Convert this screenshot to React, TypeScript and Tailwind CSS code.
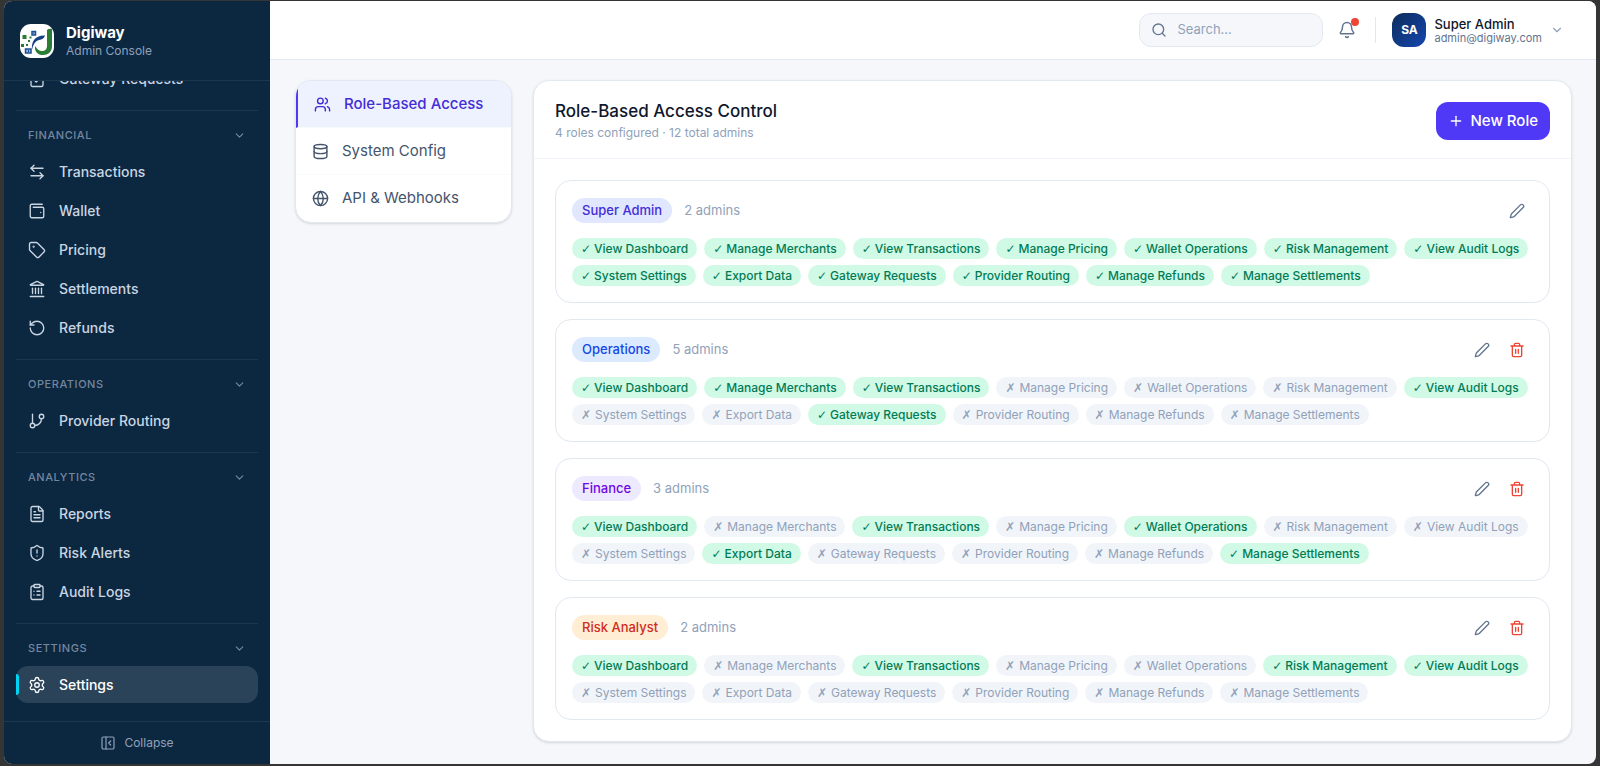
import { useState } from 'react';
import {
  ArrowLeftRight, Bell, ChevronDown, ClipboardCheck, ClipboardList, Database, FileText, GitBranch, Globe,
  Landmark, PanelLeftClose, Plus, RotateCcw, Search, Settings, ShieldAlert, Tag, Users, WalletMinimal,
} from 'lucide-react';

const navSections = [
  {
    title: 'Financial',
    items: [
      { label: 'Transactions', icon: ArrowLeftRight },
      { label: 'Wallet', icon: WalletMinimal },
      { label: 'Pricing', icon: Tag },
      { label: 'Settlements', icon: Landmark },
      { label: 'Refunds', icon: RotateCcw },
    ],
  },
  { title: 'Operations', items: [{ label: 'Provider Routing', icon: GitBranch }] },
  {
    title: 'Analytics',
    items: [
      { label: 'Reports', icon: FileText },
      { label: 'Risk Alerts', icon: ShieldAlert },
      { label: 'Audit Logs', icon: ClipboardList },
    ],
  },
  { title: 'Settings', items: [{ label: 'Settings', icon: Settings }] },
];

const tabs = [
  { label: 'Role-Based Access', icon: Users },
  { label: 'System Config', icon: Database },
  { label: 'API & Webhooks', icon: Globe },
];

const permissions = [
  'View Dashboard', 'Manage Merchants', 'View Transactions', 'Manage Pricing', 'Wallet Operations',
  'Risk Management', 'View Audit Logs', 'System Settings', 'Export Data', 'Gateway Requests',
  'Provider Routing', 'Manage Refunds', 'Manage Settlements',
];

const roles = [
  { name: 'Super Admin', admins: 2, badge: 'bg-indigo-100 text-indigo-700', granted: permissions, locked: true },
  {
    name: 'Operations', admins: 5, badge: 'bg-blue-100 text-blue-700', locked: false,
    granted: ['View Dashboard', 'Manage Merchants', 'View Transactions', 'View Audit Logs', 'Gateway Requests'],
  },
  {
    name: 'Finance', admins: 3, badge: 'bg-violet-100 text-violet-700', locked: false,
    granted: ['View Dashboard', 'View Transactions', 'Wallet Operations', 'Export Data', 'Manage Settlements'],
  },
  {
    name: 'Risk Analyst', admins: 2, badge: 'bg-orange-100 text-[#cf2e1e]', locked: false,
    granted: ['View Dashboard', 'View Transactions', 'Risk Management', 'View Audit Logs'],
  },
];

function Logo() {
  return (
    <svg viewBox="0 0 34 34" className="size-[34px] shrink-0" aria-hidden="true">
      <rect width="34" height="34" rx="11" fill="#fff" />
      <path d="M27 6q2-2 5-1v17c0 6-4 9-9 9-4 0-7-2-8-6v-3c2 3 4 5 7 5 3 0 5-2 5-5z" fill="#2b7d35" />
      <path d="M12 26c-1-8 3-15 13-14.500-1 3-3 4-6 4.500-4 1-6 5-7 10z" fill="#173f86" />
      <path d="M2.500 11h4v4h-4zM8 16h2v2H8zM1 20h3v3H1zM6 20h2v2H6zM9.500 12.500h2v2h-2z" fill="#2b7d35" />
      <path d="M12 7.500h3.500V11H12zM5.500 25H11v4H5.500z" fill="#9db7dd" stroke="#1d4f93" strokeWidth="1.500" />
      <path d="M13 8.500h1v1h-1zM8 26h1v2H8z" fill="#1d4f93" />
    </svg>
  );
}

function PencilIcon() {
  return (
    <svg viewBox="0 0 24 24" className="size-4" fill="none" stroke="currentColor" strokeWidth="2" strokeLinecap="round" strokeLinejoin="round">
      <path d="M21.174 6.812a1 1 0 0 0-3.986-3.987L3.842 16.174a2 2 0 0 0-.5.830l-1.321 4.352a.5.5 0 0 0 .623.622l4.353-1.320a2 2 0 0 0 .830-.497z" />
    </svg>
  );
}

function TrashIcon() {
  return (
    <svg viewBox="0 0 24 24" className="size-4" fill="none" stroke="currentColor" strokeWidth="2" strokeLinecap="round" strokeLinejoin="round">
      <path d="M3 6h18M19 6v14a2 2 0 0 1-2 2H7a2 2 0 0 1-2-2V6M8 6V4a2 2 0 0 1 2-2h4a2 2 0 0 1 2 2v2M10 11v6M14 11v6" />
    </svg>
  );
}

function Sidebar() {
  return (
    <aside className="flex w-[266px] shrink-0 flex-col bg-[#0c2841] text-slate-300">
      <div className="flex h-20 shrink-0 items-center gap-3 border-b border-white/7 px-4">
        <Logo />
        <div>
          <div className="text-[15px] leading-5 font-bold text-white">Digiway</div>
          <div className="text-xs leading-4 text-slate-400">Admin Console</div>
        </div>
      </div>
      <nav className="flex min-h-0 flex-1 flex-col justify-end overflow-hidden px-3 pb-[18px]">
        <a href="#gateway" className="flex h-[37px] shrink-0 items-center gap-[13px] px-3 text-sm font-medium">
          <ClipboardCheck className="size-[18px]" strokeWidth={1.8} />
          Gateway Requests
        </a>
        {navSections.map((section) => (
          <section key={section.title} className="mt-[13px] flex shrink-0 flex-col gap-[2px] border-t border-white/7 pt-2">
            <button className="flex h-8 w-full items-center justify-between px-3 text-[11px] font-medium tracking-wider text-slate-400/80 uppercase">
              {section.title}
              <ChevronDown className="size-[13px]" />
            </button>
            {section.items.map(({ label, icon: Icon }) => (
              <a
                key={label}
                href="#nav"
                className={`relative flex h-[37px] items-center gap-[13px] rounded-xl px-3 text-sm font-medium ${label === 'Settings' ? 'bg-[#2b4359] text-white' : ''}`}
              >
                {label === 'Settings' && <span className="absolute top-2 left-0 h-[21px] w-[3px] rounded-r bg-cyan-400" />}
                <Icon className="size-[18px]" strokeWidth={1.8} />
                {label}
              </a>
            ))}
          </section>
        ))}
      </nav>
      <button className="flex h-[43px] shrink-0 items-center justify-center gap-2 border-t border-white/7 text-xs text-slate-400">
        <PanelLeftClose className="size-4" strokeWidth={1.8} />
        Collapse
      </button>
    </aside>
  );
}

function Header() {
  return (
    <header className="flex h-[59px] shrink-0 items-center justify-end gap-3 border-b border-slate-200 bg-white pr-8">
      <label className="flex h-[34px] w-[184px] items-center gap-[10px] rounded-xl border border-slate-200 bg-[#f5f7fb] px-[11px] text-slate-500">
        <Search className="size-4 shrink-0" />
        <input type="search" aria-label="Search" placeholder="Search..." className="w-full min-w-0 bg-transparent text-[13px] outline-none placeholder:text-slate-400" />
      </label>
      <button aria-label="Notifications" className="relative p-[3px] text-slate-500">
        <Bell className="size-[18px]" />
        <span className="absolute top-0 right-0 size-2 rounded-full bg-[#ee4433]" />
      </button>
      <div className="mx-1 h-[26px] w-px bg-slate-200" />
      <button className="flex items-center gap-2 text-left">
        <span className="flex size-[34px] items-center justify-center rounded-xl bg-linear-to-br from-[#0c2d5c] to-[#1746b0] text-xs font-bold text-white">SA</span>
        <span>
          <span className="block text-[13px] leading-4 font-medium text-slate-900">Super Admin</span>
          <span className="block text-[11px] leading-3 text-slate-500">admin@digiway.com</span>
        </span>
        <ChevronDown className="size-[14px] text-slate-400" />
      </button>
    </header>
  );
}

function RoleCard({ role }: { role: (typeof roles)[number] }) {
  return (
    <article className="rounded-2xl border border-slate-200 p-4">
      <div className="flex h-[27px] items-center justify-between">
        <div className="flex items-center gap-3">
          <h3 className={`rounded-full px-[10px] text-[13px] leading-[25px] font-medium ${role.badge}`}>{role.name}</h3>
          <span className="text-[13px] text-slate-400">{role.admins} admins</span>
        </div>
        <div className="flex gap-[3px]">
          <button aria-label={`Edit ${role.name}`} className="px-2 py-1 text-slate-500"><PencilIcon /></button>
          {!role.locked && <button aria-label={`Delete ${role.name}`} className="px-2 py-1 text-[#ee4433]"><TrashIcon /></button>}
        </div>
      </div>
      <ul className="mt-[14px] flex flex-wrap gap-x-[7px] gap-y-[6px]">
        {permissions.map((permission) => {
          const granted = role.granted.includes(permission);
          return (
            <li
              key={permission}
              className={`flex h-[21px] items-baseline rounded-full px-[9px] text-xs leading-[21px] ${granted ? 'gap-[3px] bg-emerald-100 font-medium text-emerald-700' : 'gap-1 bg-slate-100 text-slate-400'}`}
            >
              <span className="font-['DejaVu_Sans',sans-serif] text-xs leading-none font-normal">{granted ? '✓' : '✗'}</span>
              {permission}
            </li>
          );
        })}
      </ul>
    </article>
  );
}

export default function App() {
  const [activeTab, setActiveTab] = useState('Role-Based Access');

  return (
    <div className="h-screen bg-[#353535] px-1 pt-px pb-[2px] font-['Inter',sans-serif]">
      <div className="flex h-full overflow-hidden rounded-lg bg-[#f5f7fb]">
        <Sidebar />
        <div className="flex min-w-0 flex-1 flex-col">
          <Header />
          <main className="flex flex-1 items-start gap-[21px] pt-5 pr-6 pl-[25px]">
            <div className="w-[217px] shrink-0 overflow-hidden rounded-2xl border border-slate-200 bg-white shadow-sm">
              {tabs.map(({ label, icon: Icon }) => (
                <button
                  key={label}
                  onClick={() => setActiveTab(label)}
                  className={`flex h-[47px] w-full items-center gap-[13px] border-b border-slate-50 px-4 text-[15px] last:border-b-0 ${activeTab === label ? 'border-l-2 border-l-indigo-600 bg-indigo-50 font-medium text-indigo-700' : 'text-slate-600'}`}
                >
                  <Icon className="size-[17px]" />
                  {label}
                </button>
              ))}
            </div>
            <section className="min-w-0 flex-1 rounded-2xl border border-slate-200 bg-white shadow-sm">
              <div className="flex items-center justify-between border-b border-slate-100 px-[21px] pt-[18px] pb-[15px]">
                <div>
                  <h2 className="text-[17px] leading-6 font-medium text-slate-900">Role-Based Access Control</h2>
                  <p className="text-xs leading-5 text-slate-400">4 roles configured · 12 total admins</p>
                </div>
                <button className="flex h-[38px] items-center gap-[6px] rounded-xl bg-[#4f39f6] px-3 text-[15px] font-medium text-white">
                  <Plus className="size-4" />
                  New Role
                </button>
              </div>
              <div className="flex flex-col gap-4 px-[21px] py-[21px]">
                {roles.map((role) => <RoleCard key={role.name} role={role} />)}
              </div>
            </section>
          </main>
        </div>
      </div>
    </div>
  );
}
